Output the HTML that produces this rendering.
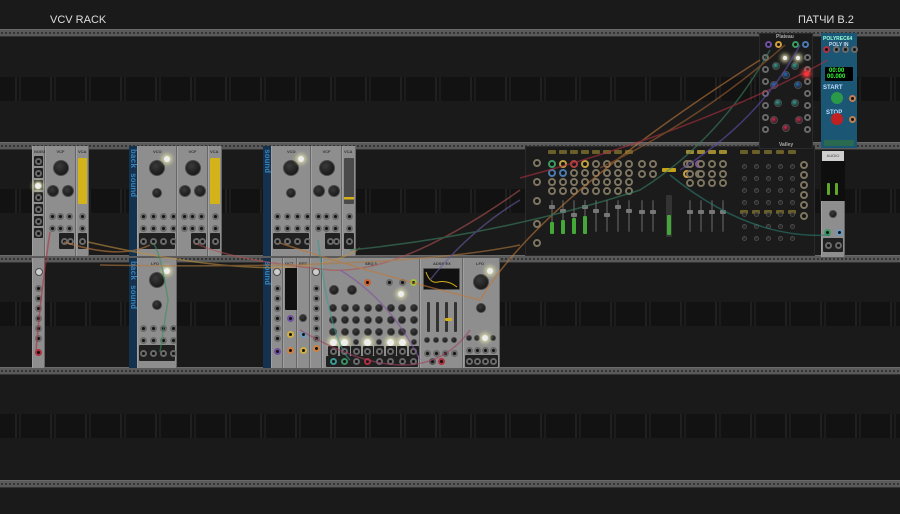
<!DOCTYPE html>
<html><head><meta charset="utf-8"><style>
*{margin:0;padding:0;box-sizing:border-box}
body{width:900px;height:514px;overflow:hidden;background:#1a1a1a;position:relative;font-family:"Liberation Sans","Noto Sans CJK SC",sans-serif}
.a{position:absolute}
.rail{position:absolute;left:0;width:900px;height:8px;background:#5a5a5a;border-top:1px solid #6a6a6a;border-bottom:1px solid #333;
background-image:radial-gradient(circle,#2e2e2e 0.9px,transparent 1.2px);background-size:4px 4px;background-position:0 1px}
.band{position:absolute;left:0;width:900px;height:24px;background:#121212;
background-image:repeating-linear-gradient(90deg,transparent 0 15px,#202020 15px 17px,transparent 17px 19px,#1c1c1c 19px 21px,transparent 21px 35px)}
.m{position:absolute;background:#8e8e8e;border-left:1px solid #a0a0a0;border-right:1px solid #666}
.d{position:absolute;background:#1b1b1b;border:1px solid #2a2a2a}
.bl{position:absolute;background:#14324d}
.bl span{position:absolute;color:#3784c0;font:bold 8px "Liberation Mono",monospace;transform:rotate(90deg);transform-origin:0 0;white-space:nowrap;left:8px}
.k{position:absolute;border-radius:50%;background:radial-gradient(circle at 40% 35%,#3a3a3a,#0e0e0e);border:1px solid #4a4a4a}
.j{position:absolute;width:7px;height:7px;border-radius:50%;background:#111;border:2px solid #6a6a6a}
.jt{position:absolute;width:8px;height:8px;border-radius:50%;background:#151515;border:2px solid #7d7560}
.t{position:absolute;font-size:4px;color:#333;font-weight:bold}
.blk{position:absolute;background:#202020;border-radius:1px}
.led{position:absolute;border-radius:50%;background:#eee;box-shadow:0 0 4px 2px #dda}
</style></head><body>
<div class="a" style="left:50px;top:14px;color:#ddd;font-size:11px">VCV RACK</div>
<div class="a" style="left:798px;top:14px;color:#ddd;font-size:11px">ПАТЧИ В.2</div>

<div class="rail" style="top:29px"></div>
<div class="rail" style="top:142px"></div>
<div class="rail" style="top:255px"></div>
<div class="rail" style="top:367px"></div>
<div class="rail" style="top:480px"></div>
<div class="band" style="top:77px"></div>
<div class="band" style="top:189px"></div>
<div class="band" style="top:302px"></div>
<div class="band" style="top:414px"></div>

<div id="mods"></div>
<svg class="a" style="left:0;top:0" width="900" height="514" fill="none" stroke-width="1.5" opacity="0.6">
<path d="M50 232 Q40 300 36 352" stroke="#b03040"/>
<path d="M64 242 Q120 260 150 245" stroke="#c07a40"/>
<path d="M88 242 Q300 290 360 248" stroke="#c09040"/>
<path d="M153 243 Q160 250 168 300 L160 352" stroke="#3a9060"/>
<path d="M195 243 Q230 260 330 270 Q400 275 520 190" stroke="#b05050"/>
<path d="M280 243 Q360 270 480 300 Q540 200 760 60" stroke="#c07838"/>
<path d="M318 240 Q330 340 350 360" stroke="#3a9a90"/>
<path d="M350 250 Q500 235 640 190 Q720 140 770 50" stroke="#3a8060"/>
<path d="M300 330 Q420 400 470 330" stroke="#a04060"/>
<path d="M340 270 Q390 300 420 360" stroke="#8050a0"/>
<path d="M520 178 Q700 130 828 60" stroke="#b03040"/>
<path d="M600 168 Q700 120 785 45" stroke="#a06030"/>
<path d="M680 170 Q760 120 800 45" stroke="#6050b0"/>
<path d="M670 175 Q750 240 830 235" stroke="#2a7a70"/>
<path d="M100 265 Q400 270 520 245" stroke="#b07a40"/>
<path d="M520 200 Q470 230 430 280" stroke="#6a5aa0"/>
</svg>
<script>
var H='';
function m(x,y,w,h,c){H+='<div class="m" style="left:'+x+'px;top:'+y+'px;width:'+w+'px;height:'+h+'px'+(c?';'+c:'')+'"></div>'}
function d(x,y,w,h,c){H+='<div class="d" style="left:'+x+'px;top:'+y+'px;width:'+w+'px;height:'+h+'px'+(c?';'+c:'')+'"></div>'}
function k(x,y,r,c){H+='<div class="k" style="left:'+(x-r)+'px;top:'+(y-r)+'px;width:'+2*r+'px;height:'+2*r+'px'+(c?';'+c:'')+'"></div>'}
function j(x,y,c){H+='<div class="j" style="left:'+(x-3.5)+'px;top:'+(y-3.5)+'px'+(c?';border-color:'+c:'')+'"></div>'}
function jt(x,y,c){H+='<div class="jt" style="left:'+(x-4)+'px;top:'+(y-4)+'px'+(c?';border-color:'+c:'')+'"></div>'}
function b(x,y,w,h,c){H+='<div class="blk" style="left:'+x+'px;top:'+y+'px;width:'+w+'px;height:'+h+'px'+(c?';'+c:'')+'"></div>'}
function t(x,y,s,c){H+='<div class="t" style="left:'+x+'px;top:'+y+'px'+(c?';'+c:'')+'">'+s+'</div>'}
function led(x,y,r){H+='<div class="led" style="left:'+(x-r)+'px;top:'+(y-r)+'px;width:'+2*r+'px;height:'+2*r+'px"></div>'}
function bl(x,y,h,s){H+='<div class="bl" style="left:'+x+'px;top:'+y+'px;width:8px;height:'+h+'px"><span style="top:3px">'+s+'</span></div>'}
function vco(x,y,w){m(x,y,w,110);t(x+w/2-4,y+3,'VCO');k(x+w/2,y+22,8);led(x+w/2+10,y+13,3);k(x+w/2,y+47,5);
 for(var i=0;i<4;i++){j(x+6+i*(w-10)/3,y+70);j(x+6+i*(w-10)/3,y+82)} b(x+2,y+87,w-4,16);for(i=0;i<4;i++)j(x+6+i*(w-10)/3,y+95)}
function vcf(x,y,w){m(x,y,w,110);t(x+w/2-4,y+3,'VCF');k(x+w/2,y+22,8);k(x+8,y+45,6);k(x+w-8,y+45,6);
 for(var i=0;i<3;i++){j(x+7+i*(w-14)/2,y+70);j(x+7+i*(w-14)/2,y+82)} b(x+w/2-2,y+87,w/2,16);j(x+w/2+4,y+95);j(x+w-6,y+95)}
function vca(x,y,w,c){m(x,y,w,110);t(x+2,y+3,'VCA');b(x+2,y+12,w-4,46,c);j(x+w/2,y+70);j(x+w/2,y+82);b(x+2,y+87,w-4,16);j(x+w/2,y+95)}
var Y=146;
m(32,Y,13,110);for(var i=0;i<7;i++)b(34,Y+10+i*12,9,10),j(38.5,Y+15+i*12);led(38,Y+40,3);t(34,Y+3,'NOISE');
vcf(45,Y,31);vca(76,Y,13,'background:#d4b21a');
bl(129,Y,110,'back sound');vco(137,Y,40);vcf(177,Y,31);vca(208,Y,14,'background:#d4b21a');
bl(263,Y,110,'sound');vco(271,Y,40);vcf(311,Y,31);vca(342,Y,14,'background:linear-gradient(#4a4a4a 85%,#d4b21a 85%,#d4b21a 90%,#4a4a4a 90%)');
var Z=258;
m(32,Z,13,110);k(38.5,Z+14,4,'background:#ccc');for(i=0;i<6;i++)j(38.5,Z+30+i*10);j(38.5,Z+94,'#b03040');
bl(129,Z,110,'back sound');m(137,Z,40,110);t(151,Z+3,'LFO');k(157,Z+22,8);led(167,Z+13,3);k(157,Z+47,5);
for(i=0;i<4;i++){j(143+i*10,Z+70);j(143+i*10,Z+82)}b(139,Z+87,36,16);for(i=0;i<4;i++)j(143+i*10,Z+95);
bl(263,Z,110,'sound');m(271,Z,12,110);k(277,Z+14,4,'background:#ccc');for(i=0;i<6;i++)j(277,Z+30+i*10);j(277,Z+93,'#7050a0');
m(283,Z,14,110);t(285,Z+3,'OCT');b(285,Z+10,24,42,'background:#111');b(298,Z+14,9,36,'background:repeating-linear-gradient(#d4b21a 0 3px,#111 3px 5px)');
j(290,Z+60,'#7050a0');j(290,Z+76,'#d0b040');j(290,Z+92,'#d08040');
m(297,Z,13,110);t(299,Z+3,'BRT');k(303,Z+60,4);j(303,Z+76,'#6a9ac0');j(303,Z+92,'#d0b040');
m(310,Z,12,110);k(316,Z+14,4,'background:#ccc');for(i=0;i<6;i++)j(316,Z+30+i*10);j(316,Z+90,'#d08040');
m(322,Z,98,110);t(365,Z+3,'SEQ 3');k(334,Z+32,5);k(352,Z+32,5);j(367,Z+24,'#d06030');j(389,Z+24);j(402,Z+24);j(413,Z+24,'#a0c040');led(401,Z+36,3);
for(var r=0;r<3;r++)for(i=0;i<8;i++)k(333+i*11.5,Z+50+r*12,4);
for(i=0;i<8;i++){if([0,1,3,5,6].indexOf(i)>=0)led(333+i*11.5,Z+84,3.5);else k(333+i*11.5,Z+84,3)}
for(i=0;i<8;i++){b(328+i*11.5,Z+88,10,10);j(333+i*11.5,Z+93)}b(326,Z+98,92,11);
var cc=['#3a9a90','#3a9060','','#b03040','','','',''];for(i=0;i<8;i++)j(333+i*11.5,Z+103,cc[i]);
m(420,Z,43,110);t(433,Z+3,'ADSR EX');b(423,Z+10,37,22,'background:#111;border:1px solid #555');
H+='<svg class="a" style="left:424px;top:'+(Z+12)+'px" width="35" height="19"><path d="M2 2 Q6 14 14 12 Q24 10 33 17" stroke="#d4b21a" fill="none"/></svg>';
for(i=0;i<4;i++)b(427+i*9,Z+44,3,30,'background:#333');b(445,Z+60,7,3,'background:#d4b21a');
for(i=0;i<4;i++){k(427+i*9,Z+82,3);j(427+i*9,Z+95)}j(432,Z+103,'#555');j(441,Z+103,'#b03040');
m(463,Z,37,110);t(476,Z+3,'LFO');k(481,Z+24,8);led(490,Z+13,3);k(481,Z+50,5);
for(i=0;i<4;i++){k(469+i*8,Z+80,3);j(469+i*8,Z+92)}led(485,Z+80,3);b(465,Z+97,33,12);for(i=0;i<4;i++)j(469+i*8,Z+103);
d(525,146,290,110);
var tan=['#3a9a60','#c0a040','#b04040','#c0a040'];
for(i=0;i<3;i++)jt(537,163+i*19);jt(537,224);jt(537,243);
for(i=0;i<8;i++){var x=552+i*11;b(x-4,150,8,4,'background:#6a5f28');for(r=0;r<4;r++)jt(x,164+r*9,r==0&&i<4?tan[i]:(r==1&&i<2?'#4a7ab0':null));
 b(x-1,200,2,32,'background:#444');b(x-3,205+(i%3)*4,6,4,'background:#777');}
for(i=0;i<4;i++)b(552+i*11-2,222-i*2,4,12+i*2,'background:#44a838');
for(i=0;i<2;i++){var x=642+i*11;jt(x,164);jt(x,174);b(x-1,200,2,32,'background:#444');b(x-3,210,6,4,'background:#777')}
b(662,168,14,4,'background:#c4a21a');b(666,195,6,42,'background:#333');b(667,215,4,20,'background:#44a838');
jt(687,164);jt(699,164,'#8050a0');jt(687,174,'#d0a040');jt(699,174);
for(i=0;i<4;i++){var x=690+i*11;b(x-4,150,8,4,'background:#a08a30');jt(x,164);jt(x,174);jt(x,183);b(x-1,200,2,32,'background:#444');b(x-3,210,6,4,'background:#777')}
for(i=0;i<5;i++){var x=744+i*12;b(x-4,150,8,4,'background:#6a5f28');b(x-4,210,8,4,'background:#6a5f28');for(r=0;r<7;r++)k(x,166+r*12,2.5)}
for(i=0;i<4;i++)jt(804,165+i*10);jt(804,205);jt(804,216);
H+='<div class="a" style="left:822px;top:151px;width:22px;height:10px;background:#cfcfcf;font-size:4px;color:#444;text-align:center;line-height:10px">AUDIO</div>';
b(821,161,24,40,'background:#0e0e0e');b(827,183,3,12,'background:#5eaa28');b(835,183,3,12,'background:#5eaa28');
m(821,201,24,56);k(833,214,4);j(827,232,'#3a9a60');j(839,232,'#6a9ac0');b(823,238,20,14);j(828,245);j(838,245);
d(759,33,54,116);t(776,34,'Plateau','color:#aaa;font-size:5px');t(779,142,'Valley','color:#aaa;font-size:5px');
[[768,44,'#7050a0'],[778,44,'#d0a040'],[795,44,'#3a9a60'],[805,44,'#4a7ab0']].forEach(function(p){j(p[0],p[1],p[2])});
for(i=0;i<7;i++){j(765,57+i*12);j(807,57+i*12)}
[[776,66,'#3a9a90'],[795,66,'#3a9a90'],[786,75,'#2a6ab0'],[774,85,'#2a6ab0'],[798,85,'#2a6ab0'],[778,103,'#3a9a90'],[795,103,'#3a9a90'],[774,120,'#c03050'],[786,128,'#c03050'],[799,120,'#c03050']].forEach(function(p){k(p[0],p[1],4,'background:radial-gradient(circle at 40% 35%,'+p[2]+',#111)')});
led(785,58,2);led(798,58,2);H+='<div class="led" style="left:804px;top:71px;width:5px;height:5px;background:#f33;box-shadow:0 0 4px 2px #f44"></div>';
H+='<div class="a" style="left:821px;top:33px;width:36px;height:115px;background:#1c5675"></div>';
t(823,36,'POLYREC64','color:#9fd;font-size:5px');t(829,42,'POLY IN','color:#cde;font-size:5px');
j(826,49,'#b03040');j(836,49);j(845,49);j(854,49);
b(825,67,28,14,'background:#000');t(829,68,'00:00','color:#3f3;font-size:6px');t(827,74,'00.000','color:#3f3;font-size:6px');
t(823,85,'START','color:#bdf;font-size:6px');k(837,98,6,'background:#2a9a4a;border:none');j(852,98,'#c08050');
t(826,110,'STOP','color:#bdf;font-size:6px');k(837,119,6,'background:#c02020;border:none');j(852,119,'#c08050');b(824,140,30,6,'background:#2a6a50');
document.getElementById('mods').innerHTML=H;
</script>
</body></html>
